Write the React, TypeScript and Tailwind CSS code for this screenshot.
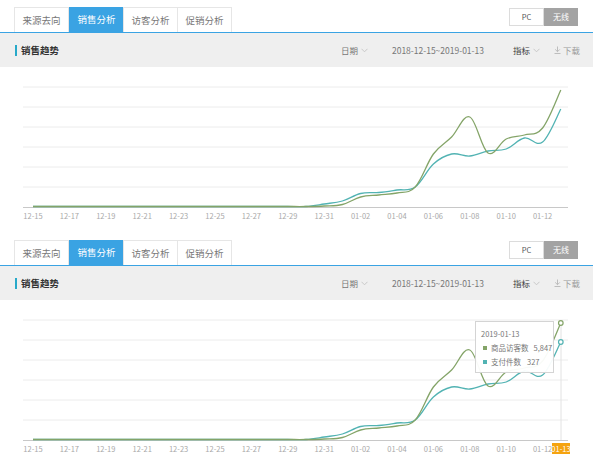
import React from "react";

const tabs = ["来源去向", "销售分析", "访客分析", "促销分析"];

// y positions (px inside the chart box) per day, 12-15 .. 01-13
const green = [
  139.5, 139.5, 139.5, 139.5, 139.5, 139.5, 139.5, 139.5, 139.5, 139.5, 139.5, 139.5, 139.5, 139.5, 139.5, 139.5,
  139, 137.5, 130, 128, 126, 120, 87, 70, 50, 86, 72, 68, 61, 23,
];
const teal = [
  139.5, 139.5, 139.5, 139.5, 139.5, 139.5, 139.5, 139.5, 139.5, 139.5, 139.5, 139.5, 139.5, 139.5, 139.5, 139.5,
  137, 134, 126.5, 125.5, 123, 120, 97, 87, 89, 84, 82, 71, 75, 42,
];
const days = [
  "12-15", "12-16", "12-17", "12-18", "12-19", "12-20", "12-21", "12-22", "12-23", "12-24",
  "12-25", "12-26", "12-27", "12-28", "12-29", "12-30", "12-31", "01-01", "01-02", "01-03",
  "01-04", "01-05", "01-06", "01-07", "01-08", "01-09", "01-10", "01-11", "01-12", "01-13",
];

const xAt = (i: number) => 33 + 18.2 * i;

function smoothPath(ys: number[]) {
  const pts = ys.map((y, i) => [xAt(i), y]);
  let d = `M${pts[0][0]},${pts[0][1]}`;
  for (let i = 0; i < pts.length - 1; i++) {
    const p0 = pts[i - 1] || pts[i];
    const p1 = pts[i];
    const p2 = pts[i + 1];
    const p3 = pts[i + 2] || p2;
    const s = 0.18;
    const c1 = [p1[0] + (p2[0] - p0[0]) * s, p1[1] + (p2[1] - p0[1]) * s];
    const c2 = [p2[0] - (p3[0] - p1[0]) * s, p2[1] - (p3[1] - p1[1]) * s];
    d += ` C${c1[0]},${c1[1]} ${c2[0]},${c2[1]} ${p2[0]},${p2[1]}`;
  }
  return d;
}

function Chevron() {
  return (
    <svg width="7" height="5" viewBox="0 0 7 5" className="ml-[3px]">
      <path d="M0.5 0.8 L3.5 3.8 L6.5 0.8" fill="none" stroke="#c4c4c4" strokeWidth="0.9" />
    </svg>
  );
}

function Chart({ hover }: { hover?: boolean }) {
  return (
    <div className="relative h-[166px]">
      <svg width="593" height="166" className="block">
        {[20, 40, 60, 80, 100, 120].map((y) => (
          <line key={y} x1="23" x2="568" y1={y} y2={y} stroke="#ececec" strokeWidth="1" />
        ))}
        <line x1="23" x2="568" y1="140.5" y2="140.5" stroke="#c8c8c8" strokeWidth="1" />
        {hover && <line x1="561" x2="561" y1="20" y2="140" stroke="#e2e2e2" strokeWidth="1" />}
        {days.map((d, i) =>
          i % 2 === 0 ? (
            <text key={d} x={xAt(i)} y="152" textAnchor="middle" fontSize="7.5" fill="#a8a8a8">
              {d}
            </text>
          ) : null
        )}
        {hover && (
          <g>
            <rect x="552" y="143" width="18" height="11" fill="#f5a30f" />
            <text x="561" y="151.5" textAnchor="middle" fontSize="7.5" fill="#ffffff">
              01-13
            </text>
          </g>
        )}
        <path d={smoothPath(teal)} fill="none" stroke="#52b3b3" strokeWidth="1.3" />
        <path d={smoothPath(green)} fill="none" stroke="#84a468" strokeWidth="1.3" />
        {hover && (
          <g>
            <circle cx={xAt(29)} cy="23" r="2.3" fill="#fff" stroke="#84a468" strokeWidth="1.2" />
            <circle cx={xAt(29)} cy="42" r="2.3" fill="#fff" stroke="#52b3b3" strokeWidth="1.2" />
          </g>
        )}
      </svg>
      {hover && (
        <div className="absolute left-[475px] top-[21px] w-[79px] h-[52px] bg-white/95 border border-[#d4d4d4] pl-[5px] pt-[5px] text-[7.5px] leading-[14px] text-[#777] whitespace-nowrap">
          <div>2019-01-13</div>
          <div className="flex items-center">
            <span className="w-[4px] h-[4px] shrink-0 bg-[#84a468] ml-[2px] mr-[4px]" />
            <span>商品访客数</span>
            <span className="ml-[5px]">5,847</span>
          </div>
          <div className="flex items-center">
            <span className="w-[4px] h-[4px] shrink-0 bg-[#52b3b3] ml-[2px] mr-[4px]" />
            <span>支付件数</span>
            <span className="ml-[6px]">327</span>
          </div>
        </div>
      )}
    </div>
  );
}

function Panel({ hover }: { hover?: boolean }) {
  return (
    <div className="h-[233px] flex flex-col">
      <div className="h-[33px] flex justify-between pl-[14px] pr-[15px] border-b border-[#3aa3e3]">
        <div className="flex mt-[7px]">
          {tabs.map((t, i) => (
            <div
              key={t}
              className={
                i === 1
                  ? "w-[55px] h-[25px] flex items-center justify-center text-[9.5px] bg-[#3aa3e3] text-white"
                  : "w-[55px] h-[25px] flex items-center justify-center text-[9.5px] text-[#777] border border-b-0 border-[#e6e6e6] -ml-px first:ml-0"
              }
            >
              {t}
            </div>
          ))}
        </div>
        <div className="flex mt-[8px] h-[18px] text-[7.5px]">
          <div className="w-[35px] flex items-center justify-center border border-[#dcdcdc] text-[#555]">PC</div>
          <div className="w-[34px] flex items-center justify-center bg-[#a3a3a3] text-white text-[8px]">无线</div>
        </div>
      </div>
      <div className="h-[34px] bg-[#efefef] flex items-center pl-[15px] pr-[13px] text-[8.5px]">
        <div className="flex items-center">
          <span className="w-[2px] h-[11px] bg-[#27a9c9] mr-[4px]" />
          <span className="text-[9.5px] font-semibold text-[#333]">销售趋势</span>
        </div>
        <div className="ml-auto flex items-center text-[#777]">
          <span>日期</span>
          <Chevron />
          <span className="ml-[24px]">2018-12-15~2019-01-13</span>
          <span className="ml-[29px] text-[#444]">指标</span>
          <Chevron />
          <span className="ml-[14px] flex items-center text-[#999]">
            <svg width="7" height="8" viewBox="0 0 7 8" className="mr-[2px]">
              <path d="M3.5 0.5 V5.5 M1.2 3.4 L3.5 5.7 L5.8 3.4 M0.5 7.5 H6.5" fill="none" stroke="#b0b0b0" strokeWidth="0.8" />
            </svg>
            下载
          </span>
        </div>
      </div>
      <Chart hover={hover} />
    </div>
  );
}

export default function App() {
  return (
    <div className="w-[593px] h-[459px] overflow-hidden bg-white font-['Noto_Sans_CJK_SC','Noto_Sans',sans-serif]">
      <Panel />
      <Panel hover />
    </div>
  );
}
